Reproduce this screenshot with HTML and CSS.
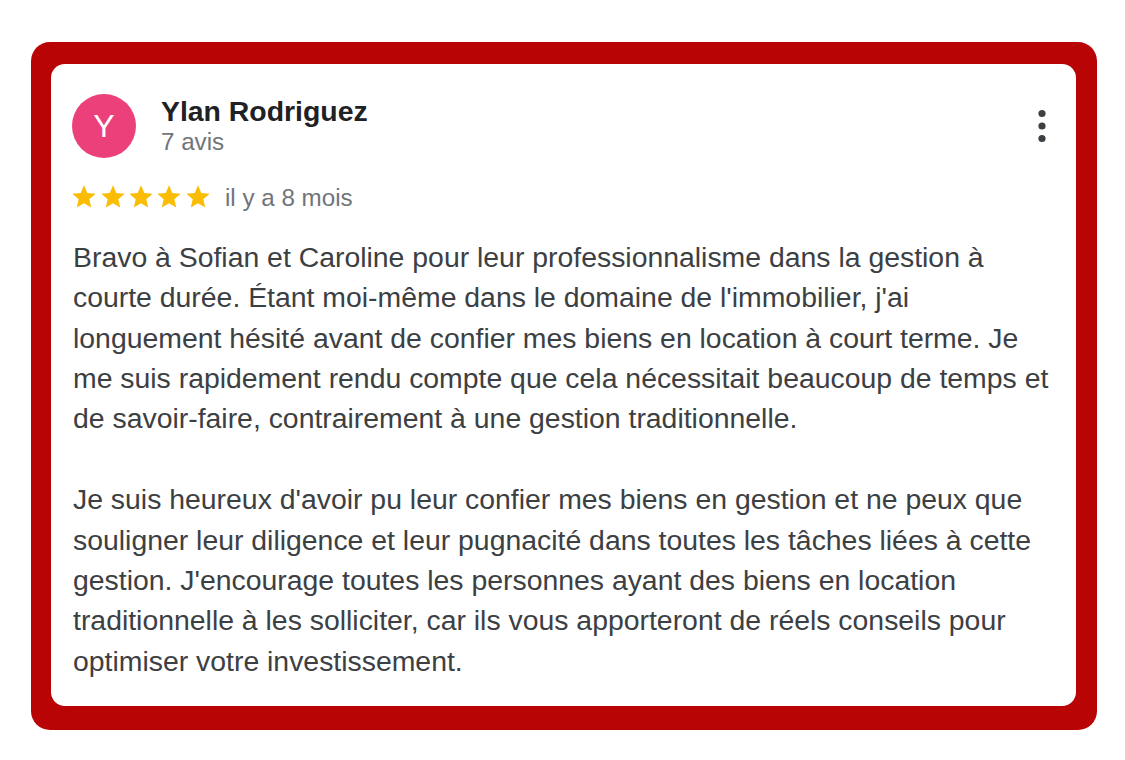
FILE: index.html
```html
<!DOCTYPE html>
<html lang="fr">
<head>
<meta charset="utf-8">
<title>Avis</title>
<link rel="stylesheet" href="styles.css">
</head>
<body>
<div class="frame">
  <div class="card">
    <div class="header">
      <div class="avatar">Y</div>
      <div class="who">
        <div class="name">Ylan Rodriguez</div>
        <div class="count">7 avis</div>
      </div>
      <div class="menu" aria-label="Plus d'options">
        <svg width="12" height="40" viewBox="0 0 12 40"><circle cx="6" cy="7.5" r="3.6"/><circle cx="6" cy="20" r="3.6"/><circle cx="6" cy="32.5" r="3.6"/></svg>
      </div>
    </div>
    <div class="rating">
      <div class="stars">
        <svg class="star" viewBox="0 0 24 24"><path d="M12 17.27L18.18 21l-1.64-7.03L22 9.24l-7.19-.61L12 2 9.19 8.63 2 9.24l5.46 4.73L5.82 21z"/></svg>
        <svg class="star" viewBox="0 0 24 24"><path d="M12 17.27L18.18 21l-1.64-7.03L22 9.24l-7.19-.61L12 2 9.19 8.63 2 9.24l5.46 4.73L5.82 21z"/></svg>
        <svg class="star" viewBox="0 0 24 24"><path d="M12 17.27L18.18 21l-1.64-7.03L22 9.24l-7.19-.61L12 2 9.19 8.63 2 9.24l5.46 4.73L5.82 21z"/></svg>
        <svg class="star" viewBox="0 0 24 24"><path d="M12 17.27L18.18 21l-1.64-7.03L22 9.24l-7.19-.61L12 2 9.19 8.63 2 9.24l5.46 4.73L5.82 21z"/></svg>
        <svg class="star" viewBox="0 0 24 24"><path d="M12 17.27L18.18 21l-1.64-7.03L22 9.24l-7.19-.61L12 2 9.19 8.63 2 9.24l5.46 4.73L5.82 21z"/></svg>
      </div>
      <span class="time">il y a 8 mois</span>
    </div>
    <div class="text">Bravo à Sofian et Caroline pour leur professionnalisme dans la gestion à courte durée. Étant moi-même dans le domaine de l'immobilier, j'ai longuement hésité avant de confier mes biens en location à court terme. Je me suis rapidement rendu compte que cela nécessitait beaucoup de temps et de savoir-faire, contrairement à une gestion traditionnelle.<br><br>Je suis heureux d'avoir pu leur confier mes biens en gestion et ne peux que souligner leur diligence et leur pugnacité dans toutes les tâches liées à cette gestion. J'encourage toutes les personnes ayant des biens en location traditionnelle à les solliciter, car ils vous apporteront de réels conseils pour optimiser votre investissement.</div>
  </div>
</div>
</body>
</html>
```

FILE: styles.css
```css
html, body {
  background: #ffffff;
}
body {
  margin: 0;
  padding: 42px 0 0 31px;
  font-family: "Liberation Sans", Arial, Helvetica, sans-serif;
}
.frame {
  width: 1066px;
  box-sizing: border-box;
  background: #b80404;
  border-radius: 19px;
  padding: 22px 21px 24px 20px;
}
.card {
  background: #ffffff;
  border-radius: 14px;
  padding: 30px 14px 25px 22px;
}
.header {
  display: flex;
  align-items: flex-start;
}
.avatar {
  width: 64px;
  height: 64px;
  border-radius: 50%;
  background: #ec407a;
  color: #ffffff;
  font-size: 32px;
  line-height: 64px;
  text-align: center;
  flex: none;
  margin-left: -1px;
}
.who {
  flex: 1;
  margin-left: 25px;
  padding-top: 1px;
}
.name {
  font-size: 28.4px;
  font-weight: 700;
  line-height: 32px;
  color: #202124;
}
.count {
  font-size: 24.2px;
  line-height: 30px;
  color: #70757a;
}
.menu {
  width: 40px;
  height: 40px;
  display: flex;
  align-items: center;
  justify-content: center;
  align-self: center;
  fill: #3c4043;
}
.rating {
  display: flex;
  align-items: center;
  margin-top: 24.7px;
}
.stars {
  display: flex;
  gap: 0.3px;
  margin-left: -2.6px;
}
.star {
  width: 28px;
  height: 28px;
  fill: #fbbc04;
  display: block;
}
.time {
  margin-left: 13.4px;
  font-size: 24.2px;
  color: #70757a;
  position: relative;
  top: 1px;
}
.text {
  margin-top: 26px;
  font-size: 28.4px;
  line-height: 40.4px;
  color: #3c4043;
}
```
